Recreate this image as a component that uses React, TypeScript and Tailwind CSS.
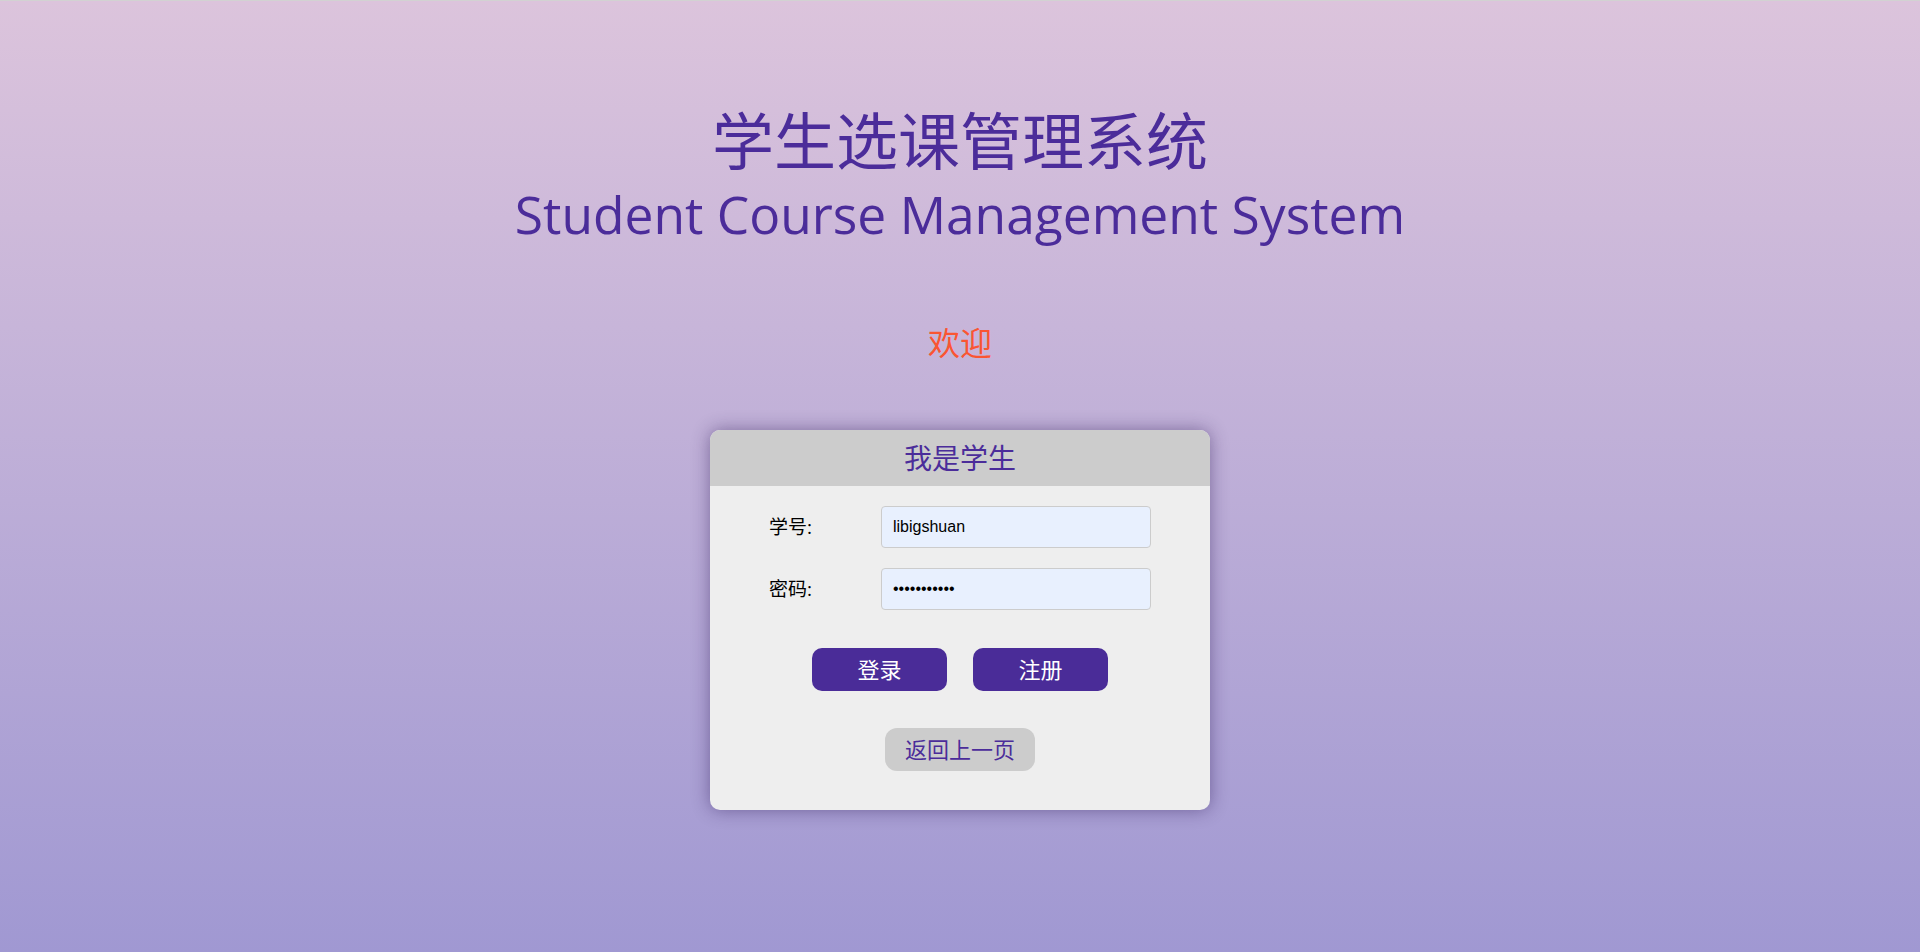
export default function App() {
  return (
    <div className="min-h-screen h-[952px] border-t border-[#d2d2d2] bg-gradient-to-b from-[#dcc4dc] to-[#a098d2] font-['Open_Sans','Noto_Sans_CJK_SC',sans-serif]">
      <div className="flex flex-col items-center">
        <h1 className="mt-[108px] text-[62px] leading-[64px] text-[#4b2c9a] font-normal">学生选课管理系统</h1>
        <h2 className="mt-[9px] text-[51.5px] leading-[64px] text-[#4b2c9a] font-normal">Student Course Management System</h2>
        <p className="mt-[77px] text-[32px] leading-[40px] text-[#fa5532]">欢迎</p>

        <div className="mt-[67px] w-[500px] rounded-[10px] bg-[#eeeeee] shadow-[0_0_18px_rgba(40,20,80,0.45)] overflow-hidden">
          <div className="h-[56px] bg-[#cccccc] flex items-center justify-center text-[28px] text-[#4b2c9a]">我是学生</div>
          <div className="flex flex-col pt-[20px] pb-[39px]">
            <div className="flex flex-col gap-[20px] pl-[59px]">
              <div className="flex items-center">
                <label className="w-[112px] text-[19px] text-black">学号:</label>
                <input
                  readOnly
                  defaultValue="libigshuan"
                  className="w-[270px] h-[42px] rounded-[4px] border border-[#cccccc] bg-[#e8f0fe] px-[11px] text-[16px] text-black font-['Liberation_Sans',Arial,sans-serif] outline-none"
                />
              </div>
              <div className="flex items-center">
                <label className="w-[112px] text-[19px] text-black">密码:</label>
                <input
                  readOnly
                  type="password"
                  defaultValue="libigshuan1"
                  className="w-[270px] h-[42px] rounded-[4px] border border-[#cccccc] bg-[#e8f0fe] px-[11px] text-[16px] text-black font-['Liberation_Sans',Arial,sans-serif] outline-none"
                />
              </div>
            </div>
            <div className="mt-[38px] flex justify-center gap-[26px]">
              <button className="w-[135px] h-[43px] rounded-[10px] bg-[#4a2c98] text-white text-[22px]">登录</button>
              <button className="w-[135px] h-[43px] rounded-[10px] bg-[#4a2c98] text-white text-[22px]">注册</button>
            </div>
            <div className="mt-[37px] flex justify-center">
              <button className="w-[150px] h-[43px] rounded-[12px] bg-[#cccccc] text-[#4b2c9a] text-[22px]">返回上一页</button>
            </div>
          </div>
        </div>
      </div>
    </div>
  );
}
